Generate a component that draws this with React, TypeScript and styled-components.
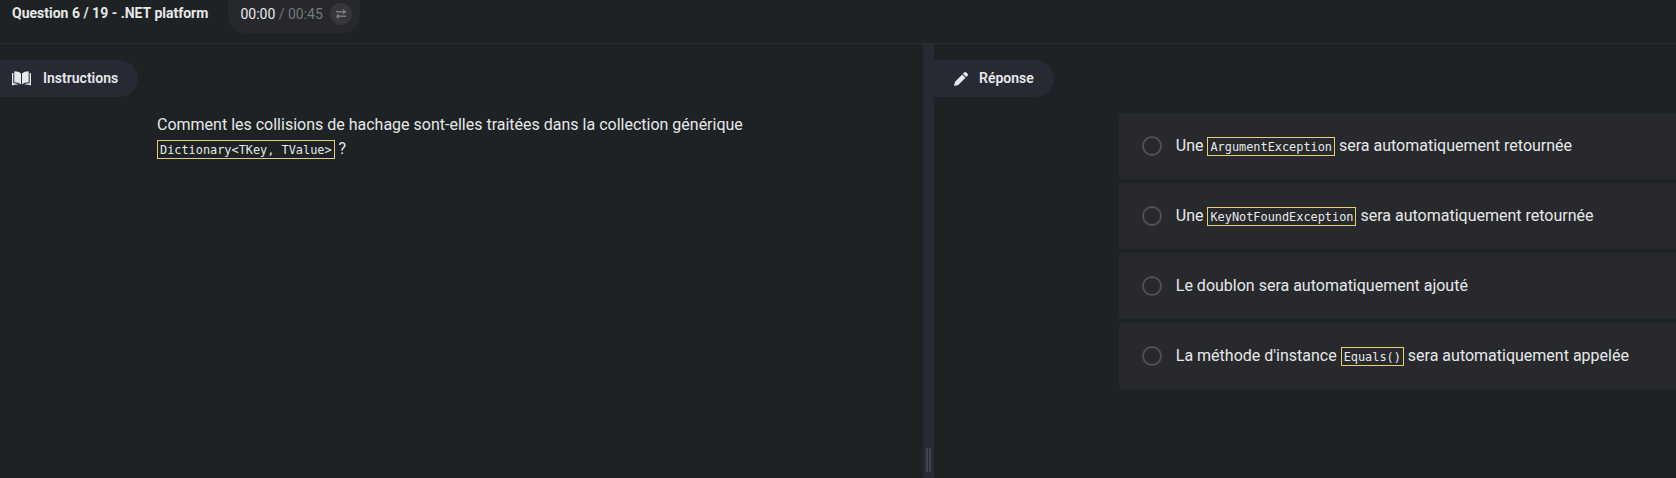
import React from "react";
import styled, { createGlobalStyle } from "styled-components";

const GlobalStyle = createGlobalStyle`
  * { box-sizing: border-box; }
  body {
    margin: 0;
    overflow: hidden;
    background: #1e2224;
    color: #e7e8e9;
    font-family: Roboto, sans-serif;
    font-size: 16px;
    line-height: 24px;
  }
`;

const Page = styled.div`
  display: flex;
  flex-direction: column;
  width: 100%;
  height: 100vh;
  overflow: hidden;
`;

const TopBar = styled.header`
  display: flex;
  align-items: flex-start;
  flex: 0 0 44px;
  padding-left: 12px;
  border-bottom: 1px solid #282c30;
`;

const Title = styled.h1`
  width: 216px;
  margin: 2px 0 0;
  font-size: 14px;
  line-height: 22px;
  font-weight: 700;
  white-space: nowrap;
`;

const Timer = styled.div`
  display: flex;
  align-items: center;
  width: 132px;
  height: 33px;
  padding: 0 8px 5px 12.4px;
  border-radius: 0 0 17px 17px;
  background: #27282c;
  font-size: 14px;
  white-space: pre;
`;

const Elapsed = styled.span`
  color: #e7e8e9;
`;

const Total = styled.span`
  color: #77797c;
`;

const SwapButton = styled.span`
  display: flex;
  align-items: center;
  justify-content: center;
  width: 22px;
  height: 22px;
  margin-left: auto;
  border-radius: 50%;
  background: #36373a;
  color: #77797c;
`;

const Split = styled.main`
  display: flex;
  flex: 1;
  min-height: 0;
`;

const Panel = styled.section<{ $width?: number }>`
  flex: ${(p) => (p.$width ? `0 0 ${p.$width}px` : "1")};
  min-width: 0;
  padding-top: 16px;
`;

const Gutter = styled.div`
  display: flex;
  align-items: flex-end;
  justify-content: center;
  gap: 1px;
  flex: 0 0 11px;
  padding-bottom: 6px;
  background: #272a32;
`;

const Grip = styled.span`
  width: 2px;
  height: 24px;
  background: #41444c;
`;

const Tab = styled.h2<{ $width: number; $inset: number }>`
  display: flex;
  align-items: center;
  width: ${(p) => p.$width}px;
  height: 37px;
  margin: 0;
  padding-left: ${(p) => p.$inset}px;
  border-radius: 0 19px 19px 0;
  background: #272a32;
  font-size: 14px;
  font-weight: 600;
`;

const TabLabel = styled.span`
  padding-bottom: 2px;
`;

const TabIcon = styled.svg<{ $gap: number }>`
  display: block;
  flex: none;
  margin-right: ${(p) => p.$gap}px;
`;

const Question = styled.p`
  width: 610px;
  margin: 16px 0 0 157px;
`;

const Code = styled.code`
  display: inline-block;
  height: 19px;
  padding: 0 2px;
  border: 1px solid #e6cf72;
  font-family: "DejaVu Sans Mono", monospace;
  font-size: 11.88px;
  line-height: 19px;
  white-space: pre;
`;

const Answers = styled.div`
  display: flex;
  flex-direction: column;
  gap: 4px;
  margin: 16px 0 0 185px;
`;

const Answer = styled.label`
  display: flex;
  align-items: center;
  height: 66px;
  padding-left: 23px;
  border-radius: 4px 0 0 4px;
  background: #28292d;
  white-space: nowrap;
`;

const Radio = styled.span`
  width: 20px;
  height: 20px;
  margin-right: 13.8px;
  border: 2px solid #4f5053;
  border-radius: 50%;
`;

const AnswerText = styled.span`
  display: block;
`;

const answers = [
  { before: "Une ", code: "ArgumentException", after: " sera automatiquement retournée" },
  { before: "Une ", code: "KeyNotFoundException", after: " sera automatiquement retournée" },
  { before: "Le doublon sera automatiquement ajouté" },
  { before: "La méthode d'instance ", code: "Equals()", after: " sera automatiquement appelée" },
];

export default function App() {
  return (
    <Page>
      <GlobalStyle />
      <TopBar>
        <Title>Question 6 / 19 - .NET platform</Title>
        <Timer>
          <Elapsed>00:00</Elapsed>
          <Total> / 00:45</Total>
          <SwapButton>
            <svg width="12" height="10" viewBox="0 0 12 10" fill="currentColor">
              <path d="M1 2h7V0l3.500 2.800L8 5.500V3.500H1zM11 6.500H4v-2L.5 7.200 4 10V8h7z" />
            </svg>
          </SwapButton>
        </Timer>
      </TopBar>
      <Split>
        <Panel $width={923}>
          <Tab $width={138} $inset={12}>
            <TabIcon $gap={12} width="19" height="15" viewBox="0 0 19 15" fill="#e7e8e9">
              <path d="M2.300.2C5 .2 7.500 1 9 2.500v11C7.300 11.900 5 11.200 2.300 11.200zM16.700.2C14 .2 11.500 1 10 2.500v11c1.700-1.600 4-2.300 6.700-2.300z" />
              <path d="M0 2h1.300v10.200c2.200 0 4 .4 5.700 1.400-2.500-.3-4.700 0-7 .8zM19 2h-1.300v10.200c-2.200 0-4 .4-5.700 1.400 2.500-.3 4.700 0 7 .8z" />
            </TabIcon>
            <TabLabel>Instructions</TabLabel>
          </Tab>
          <Question>
            Comment les collisions de hachage sont-elles traitées dans la collection générique{" "}
            <Code>{"Dictionary<TKey, TValue>"}</Code> ?
          </Question>
        </Panel>
        <Gutter>
          <Grip />
          <Grip />
        </Gutter>
        <Panel>
          <Tab $width={120} $inset={20}>
            <TabIcon $gap={11} width="14" height="14" viewBox="0 0 14 14" fill="#e7e8e9">
              <path d="M10.200.5a1.500 1.500 0 0 1 2.100 0l1.200 1.200a1.500 1.500 0 0 1 0 2.100l-1.300 1.300-3.300-3.300zM8.200 2.500l3.300 3.300-7.300 7.100L0 14l1.100-4.200z" />
            </TabIcon>
            <TabLabel>Réponse</TabLabel>
          </Tab>
          <Answers>
            {answers.map((a, i) => (
              <Answer key={i}>
                <Radio />
                <AnswerText>
                  {a.before}
                  {a.code && <Code>{a.code}</Code>}
                  {a.after}
                </AnswerText>
              </Answer>
            ))}
          </Answers>
        </Panel>
      </Split>
    </Page>
  );
}
